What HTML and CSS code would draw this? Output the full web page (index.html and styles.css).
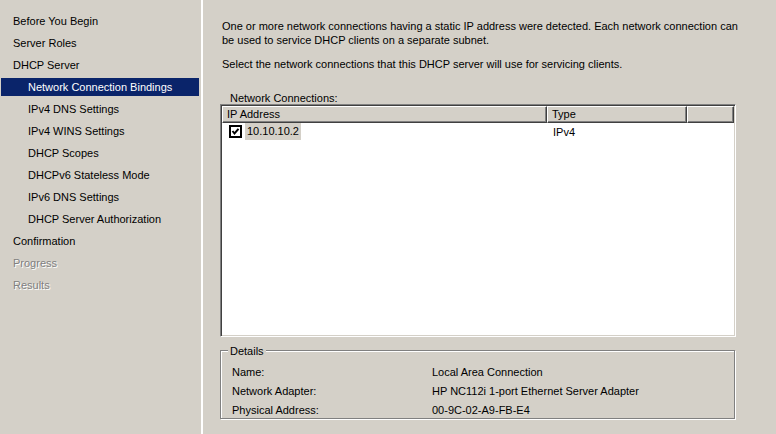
FILE: index.html
```html
<!DOCTYPE html>
<html>
<head>
<meta charset="utf-8">
<link rel="stylesheet" href="styles.css">
</head>
<body>
<div class="wizard">
  <nav class="steps">
    <div class="step">Before You Begin</div>
    <div class="step">Server Roles</div>
    <div class="step">DHCP Server</div>
    <div class="step sub active">Network Connection Bindings</div>
    <div class="step sub">IPv4 DNS Settings</div>
    <div class="step sub">IPv4 WINS Settings</div>
    <div class="step sub">DHCP Scopes</div>
    <div class="step sub">DHCPv6 Stateless Mode</div>
    <div class="step sub">IPv6 DNS Settings</div>
    <div class="step sub">DHCP Server Authorization</div>
    <div class="step">Confirmation</div>
    <div class="step disabled">Progress</div>
    <div class="step disabled">Results</div>
  </nav>
  <main class="page">
    <p class="intro">One or more network connections having a static IP address were detected. Each network connection can be used to service DHCP clients on a separate subnet.</p>
    <p class="intro">Select the network connections that this DHCP server will use for servicing clients.</p>
    <div class="list-label">Network Connections:</div>
    <div class="listview">
      <div class="lv-header">
        <div class="col col-ip">IP Address</div>
        <div class="col col-type">Type</div>
        <div class="col col-fill"></div>
      </div>
      <div class="lv-row">
        <div class="cell cell-ip">
          <svg class="check" width="13" height="13" viewBox="0 0 13 13"><rect x="1" y="1" width="11" height="11" fill="#fff" stroke="#000" stroke-width="2"/><path d="M3.5 6 L5.5 8.5 L9.5 3.8" fill="none" stroke="#000" stroke-width="2"/></svg>
          <span class="sel">10.10.10.2</span>
        </div>
        <div class="cell cell-type">IPv4</div>
      </div>
    </div>
    <div class="groupbox">
      <span class="legend">Details</span>
      <div class="detail-row"><span class="key">Name:</span><span class="val">Local Area Connection</span></div>
      <div class="detail-row"><span class="key">Network Adapter:</span><span class="val">HP NC112i 1-port Ethernet Server Adapter</span></div>
      <div class="detail-row"><span class="key">Physical Address:</span><span class="val">00-9C-02-A9-FB-E4</span></div>
    </div>
  </main>
</div>
</body>
</html>
```
FILE: styles.css
```css
html, body {
  margin: 0;
  height: 100%;
}
body {
  background: #d4d0c8;
  font: 11px "Liberation Sans", Arial, sans-serif;
  color: #000;
  overflow: hidden;
}
.wizard {
  display: flex;
  height: 434px;
}
.steps {
  width: 203px;
  box-sizing: border-box;
  border-right: 2px solid #fff;
  padding-top: 12px;
  display: flex;
  flex-direction: column;
  gap: 4px;
  flex: none;
}
.step {
  height: 18px;
  line-height: 18px;
  margin: 0 2px 0 1px;
  padding-left: 12px;
  white-space: nowrap;
}
.step.sub {
  padding-left: 27px;
}
.step.active {
  background: #0a246a;
  color: #fff;
}
.step.disabled {
  color: #808080;
  text-shadow: 1px 1px 0 #fff;
}
.page {
  flex: 1;
  padding: 19px 0 0 17px;
}
.intro {
  margin: 0 0 10px 2px;
  line-height: 14px;
  max-width: 520px;
}
.list-label {
  margin: 20px 0 0 10px;
  line-height: 14px;
}
.listview {
  width: 516px;
  height: 233px;
  box-sizing: border-box;
  margin-top: -1px;
  background: #fff;
  border: 1px solid;
  border-color: #808080 #fff #fff #808080;
  padding: 1px;
  box-shadow: inset 1px 1px 0 #404040, inset -1px -1px 0 #d4d0c8;
}
.lv-header {
  display: flex;
  height: 17px;
}
.col {
  box-sizing: border-box;
  background: #d4d0c8;
  border: 1px solid;
  border-color: #fff #404040 #404040 #fff;
  box-shadow: inset -1px -1px 0 #808080;
  padding-left: 4px;
  line-height: 15px;
  white-space: nowrap;
}
.col-ip { width: 325px; }
.col-type { width: 140px; }
.col-fill { flex: 1; }
.lv-row {
  display: flex;
  height: 17px;
}
.cell {
  display: flex;
  align-items: center;
  box-sizing: border-box;
}
.cell-ip {
  width: 325px;
  padding-left: 7px;
}
.check {
  flex: none;
  margin-right: 3px;
}
.sel {
  background: #d4d0c8;
  padding: 0 2px;
  line-height: 17px;
}
.cell-type {
  padding-left: 6px;
}
.groupbox {
  position: relative;
  margin-top: 13px;
  width: 515px;
  height: 69px;
  box-sizing: border-box;
  border: 1px solid #808080;
  box-shadow: 1px 1px 0 #fff, inset 1px 1px 0 #fff;
  padding: 12px 0 0 11px;
}
.legend {
  position: absolute;
  top: -7px;
  left: 7px;
  padding: 0 2px;
  line-height: 14px;
  background: #d4d0c8;
}
.detail-row {
  display: flex;
  line-height: 19px;
  height: 19px;
}
.key {
  width: 200px;
  flex: none;
}
```
